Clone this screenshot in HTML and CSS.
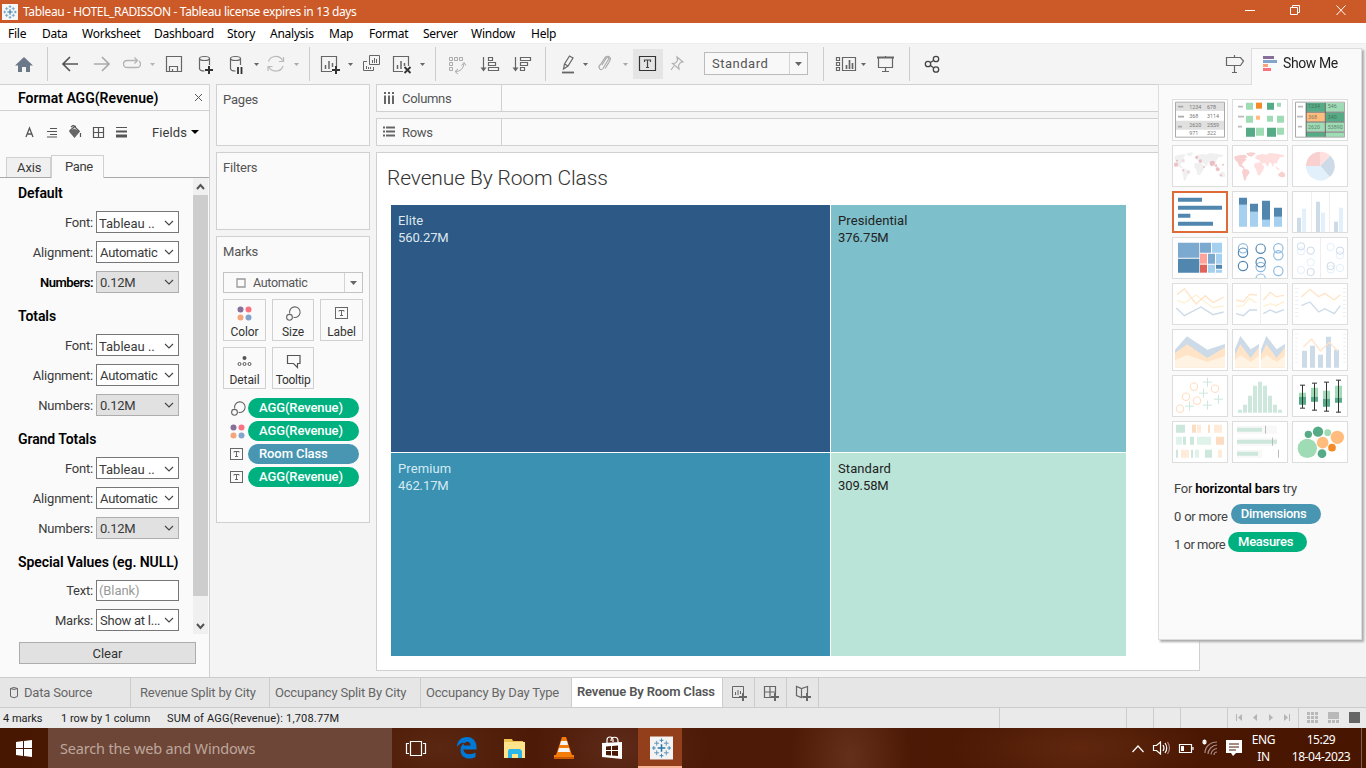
FILE: index.html
```html
<!DOCTYPE html>
<html lang="en">
<head>
<meta charset="utf-8">
<title>Tableau - HOTEL_RADISSON</title>
<link rel="stylesheet" href="styles.css">
</head>
<body>
<svg width="0" height="0" class="defs">
  <defs>
    <g id="tableau-mark" stroke="#2b78a5" fill="none">
      <path d="M12 8v8M8 12h8" stroke-width="1.600"/>
      <path d="M7 4.500v5M4.500 7h5M17 4.500v5M14.500 7h5M7 14.500v5M4.500 17h5M17 14.500v5M14.500 17h5" stroke="#5d93b8"/>
      <path d="M12 2v4M10 4h4M12 18v4M10 20h4M4 10v4M2 12h4M20 10v4M18 12h4" stroke="#3d86af"/>
    </g>
    <g id="size-icon" fill="none" stroke="#666" stroke-width="1.1"><path d="M4.700 7.500A5.300 5.300 0 1 1 8.500 11.300"/><circle cx="4.500" cy="11.300" r="2.900"/></g>
    <g id="color-icon"><circle cx="3.500" cy="3.500" r="3" fill="#86709a"/><circle cx="11.500" cy="3.500" r="3" fill="#f8737f"/><circle cx="3.500" cy="11.500" r="3" fill="#f4a57c"/><circle cx="11.500" cy="11.500" r="3" fill="#83a5cc"/></g>
    <g id="label-icon" fill="none" stroke="#666"><rect x=".5" y=".5" width="12" height="11"/><path d="M4 4.500v-1h5v1M6.500 3.500v5M5 8.500h3"/></g>
    <path id="chevron" d="M1 1l4 4 4-4" fill="none" stroke="#444" stroke-width="1.1"/>
  </defs>
</svg>

<header class="titlebar">
  <svg class="app-icon" width="16" height="16" viewBox="0 0 24 24"><path fill="#f7f7f7" d="M0 0h24v24H0z"/><use href="#tableau-mark"/></svg>
  <span class="title">Tableau - HOTEL_RADISSON - Tableau license expires in 13 days</span>
  <svg class="window-controls" width="130" height="23" viewBox="1236 0 130 23" fill="none" stroke="#fff"><path d="M1245 10.500h10M1290.500 7.500h7v7h-7zM1292.500 7.500v-2h7v7h-2M1336.500 5.500l9 9.500M1345.500 5.500l-9 9.500"/></svg>
</header>

<nav class="menubar">
  <span class="m1">File</span><span class="m2">Data</span><span class="m3">Worksheet</span><span class="m4">Dashboard</span><span class="m5">Story</span><span class="m6">Analysis</span><span class="m7">Map</span><span class="m8">Format</span><span class="m9">Server</span><span class="m10">Window</span><span class="m11">Help</span>
</nav>

<div class="toolbar">
  <svg width="47" height="41" viewBox="0 43 47 41"><path fill="#6b7888" d="M24 57l9 8.500h-3V72h-4v-5h-4v5h-4v-6.500h-3z"/></svg>
  <i class="sep"></i>
  <svg width="38" height="41" viewBox="48 43 38 41"><path d="M78 64H63M70 57l-7 7 7 7" fill="none" stroke="#555" stroke-width="1.700"/></svg>
  <svg width="32" height="41" viewBox="86 43 32 41"><path d="M94 64h15M102 57l7 7-7 7" fill="none" stroke="#aaa" stroke-width="1.700"/></svg>
  <svg width="42" height="41" viewBox="118 43 42 41"><path d="M137 60.500h-9.500q-4 0-4 3.500t4 3.500h9q4 0 4-3.500 0-2-1.500-3M134.500 57.500l3 3-3 3" fill="none" stroke="#b4b4b4" stroke-width="1.300"/><path d="M150 63h5l-2.500 3z" fill="#b4b4b4"/></svg>
  <svg width="30" height="41" viewBox="160 43 30 41"><path d="M166.500 56.500h15v15h-15zM169.500 71v-4.500h8V71M172.500 71v-2" fill="none" stroke="#666" stroke-width="1.200"/></svg>
  <svg width="32" height="41" viewBox="190 43 32 41"><g fill="none" stroke="#666" stroke-width="1.200"><ellipse cx="204.500" cy="58.500" rx="5" ry="2"/><path d="M199.500 58.500v10c0 2 3 2.500 5 2.500M209.500 58.500V65"/></g><path d="M205 70h8M209 66v8" stroke="#333" stroke-width="2"/></svg>
  <svg width="42" height="41" viewBox="222 43 42 41"><g fill="none" stroke="#666" stroke-width="1.200"><ellipse cx="235.500" cy="58.500" rx="5" ry="2"/><path d="M230.500 58.500v10c0 2 3 2.500 5 2.500M240.500 58.500V65"/></g><path d="M238 67v7M241.500 67v7" stroke="#333" stroke-width="1.800"/><path d="M254 63h5l-2.500 3z" fill="#666"/></svg>
  <svg width="45" height="41" viewBox="264 43 45 41"><path d="M268.500 61.500a7.500 7 0 0 1 14-1M283 66a7.500 7 0 0 1-14 1M283.500 57v4.500H279M268 71v-4.500h4.500" fill="none" stroke="#b8b8b8" stroke-width="1.200"/><path d="M294 63h5l-2.500 3z" fill="#aaa"/></svg>
  <i class="sep"></i>
  <svg width="46" height="41" viewBox="310 43 46 41"><path d="M332 71.500h-10.500v-15h15V67" fill="none" stroke="#666" stroke-width="1.200"/><path d="M325.500 65v4M329 61v8M332.500 63v4" stroke="#666" stroke-width="1.500"/><path d="M332 70h8M336 66v8" stroke="#333" stroke-width="2"/><path d="M348 63h5l-2.500 3z" fill="#666"/></svg>
  <svg width="30" height="41" viewBox="356 43 30 41"><g fill="none" stroke="#666"><path d="M367 61.500h-3.500v9h10V67M369.500 55.500h10v9h-10zM366.500 66v3M368.500 67v2M370.500 67v2M372.500 60v3M374.500 58v5M376.500 59v4"/></g></svg>
  <svg width="49" height="41" viewBox="386 43 49 41"><path d="M403 71.500h-9.500v-15h15V66" fill="none" stroke="#666" stroke-width="1.200"/><path d="M397.500 65v4M401 61v8M404.500 63v3" stroke="#666" stroke-width="1.500"/><path d="M404.500 67l6 6M410.500 67l-6 6" stroke="#333" stroke-width="1.800"/><path d="M420 63h5l-2.500 3z" fill="#666"/></svg>
  <i class="sep"></i>
  <svg width="38" height="41" viewBox="436 43 38 41"><path d="M449.500 57.500h3v3h-3zM454.500 57.500h3v3h-3zM459.500 57.500h3v3h-3zM449.500 62.500h3v3h-3zM449.500 67.500h3v3h-3zM455.500 71.500q7.500 0 8.500-8M461.500 65.500l2.500-3 2 3M458 69l-3 2.500 3 2.500" fill="none" stroke="#aaa"/></svg>
  <svg width="32" height="41" viewBox="474 43 32 41"><g fill="none" stroke="#666" stroke-width="1.200"><path d="M483.500 57v13M488.500 57.500h4v3h-4zM488.500 62.500h7v3h-7zM488.500 67.500h10v3h-10z"/></g><path d="M480.500 67.500h6l-3 4z" fill="#666"/></svg>
  <svg width="39" height="41" viewBox="506 43 39 41"><g fill="none" stroke="#666" stroke-width="1.200"><path d="M515.500 57v13M520.500 57.500h10v3h-10zM520.500 62.500h7v3h-7zM520.500 67.500h4v3h-4z"/></g><path d="M512.500 67.500h6l-3 4z" fill="#666"/></svg>
  <i class="sep"></i>
  <svg width="46" height="41" viewBox="546 43 46 41"><path d="M563.500 69l1-5 5-8 3.500 2-5 8zM564.500 64l3.500 2" fill="none" stroke="#666" stroke-width="1.200"/><path d="M562 72.500h12" stroke="#666" stroke-width="1.800"/><path d="M583 63h5l-2.500 3z" fill="#666"/></svg>
  <svg width="40" height="41" viewBox="592 43 40 41"><path d="M602 65l4-6.500q2-2 3 0l-6 10q-2 2.500-3.500 0t1-4l5-7.500q3-2 5 1.500 0 2-5.500 10" fill="none" stroke="#aaa" stroke-width="1.200"/><path d="M623 63h5l-2.500 3z" fill="#aaa"/></svg>
  <svg width="32" height="41" viewBox="632 43 32 41"><path fill="#e5e5e5" d="M633 49h30v30h-30z"/><path d="M639.500 56.500h16v14h-16z" fill="none" stroke="#333" stroke-width="1.200"/><path d="M644.500 62v-2h6v2M647.500 60v7.500M646 67.500h3" stroke="#444" fill="none" stroke-width="1.200"/></svg>
  <svg width="26" height="41" viewBox="664 43 26 41"><path d="M677 57l6 5-2.500.5-2 3 .5 3.500-6.500-5.500 3-.5 2-2.500zM674 66l-3 4" fill="none" stroke="#b0b0b0" stroke-width="1.200"/></svg>
  <div class="fit-select"><span>Standard</span><svg width="18" height="21"><path d="M5 9h7l-3.500 4z" fill="#666"/></svg></div>
  <i class="sep"></i>
  <svg width="45" height="41" viewBox="824 43 45 41"><path d="M836.500 57.500h3v3h-3zM836.500 62.500h3v3h-3zM836.500 67.500h3v3h-3zM842.500 57.500h13v13h-13z" fill="none" stroke="#666" stroke-width="1.200"/><path d="M846.500 65v4M849.500 60v9M852.500 63v6" stroke="#666" stroke-width="1.700"/><path d="M861 63h5l-2.500 3z" fill="#666"/></svg>
  <svg width="40" height="41" viewBox="869 43 40 41"><path d="M877 57.500h17" stroke="#666" stroke-width="2"/><path d="M878.500 58v9.500h14V58M885.500 56v1M885.500 67v4M882 71.500h7" fill="none" stroke="#666" stroke-width="1.200"/></svg>
  <i class="sep"></i>
  <svg width="40" height="41" viewBox="910 43 40 41"><g fill="none" stroke="#444" stroke-width="1.300"><circle cx="928" cy="64" r="2.700"/><circle cx="936" cy="59" r="2.700"/><circle cx="936" cy="69.500" r="2.700"/><path d="M930.500 62.500l3-2M930.500 65.500l3 2.300"/></g></svg>
  <svg class="guide" width="30" height="41" viewBox="1220 43 30 41"><path d="M1234.500 55v2M1226.500 57.500h14l3 3.500-3 4.500h-14zM1234.500 66v6.500M1232 72.500h5" fill="none" stroke="#666" stroke-width="1.200"/></svg>
</div>

<main class="workspace">
  <aside class="format-panel">
    <div class="format-head"><b>Format AGG(Revenue)</b><svg width="9" height="9" viewBox="0 0 9 9"><path d="M1 1l7 7M8 1L1 8" stroke="#555"/></svg></div>
    <div class="format-tools">
      <svg width="125" height="14" viewBox="20 125 125 14"><path d="M26 137l3.500-9 3.500 9M27 134h5" fill="none" stroke="#555" stroke-width="1.300"/><path d="M50 128.500h7M47 131.500h10M50 134.500h7M47 137h10" stroke="#555"/><path d="M69 131.500l5-3 6 3-5.500 6.500z" fill="#666"/><path d="M69.500 131l5-4.500 5 5M71 127l2-1.500 3 1M80.500 133v4" fill="none" stroke="#555" stroke-width="1.200"/><path d="M93.500 127.500h10v10h-10zM98.500 127v11M93 132.500h11" fill="none" stroke="#555" stroke-width="1.200"/><path d="M116 127.500h11" stroke="#555"/><path d="M116 131.500h11" stroke="#555" stroke-width="2"/><path d="M116 136h11" stroke="#555" stroke-width="3"/></svg>
      <span class="t-fields">Fields</span><svg width="8" height="6"><path d="M0 1h8L4 5z"/></svg>
    </div>
    <div class="format-tabs"><span class="tab-axis">Axis</span><span class="tab-pane">Pane</span></div>
    <div class="format-scroll">
      <div class="format-body">
        <h4>Default</h4>
        <label><span>Font:</span><span class="select low">Tableau ..<svg width="10" height="7"><use href="#chevron"/></svg></span></label>
        <label><span>Alignment:</span><span class="select">Automatic<svg width="10" height="7"><use href="#chevron"/></svg></span></label>
        <label><b>Numbers:</b><span class="select grey">0.12M<svg width="10" height="7"><use href="#chevron"/></svg></span></label>
        <h4>Totals</h4>
        <label><span>Font:</span><span class="select low">Tableau ..<svg width="10" height="7"><use href="#chevron"/></svg></span></label>
        <label><span>Alignment:</span><span class="select">Automatic<svg width="10" height="7"><use href="#chevron"/></svg></span></label>
        <label><span>Numbers:</span><span class="select grey">0.12M<svg width="10" height="7"><use href="#chevron"/></svg></span></label>
        <h4>Grand Totals</h4>
        <label><span>Font:</span><span class="select low">Tableau ..<svg width="10" height="7"><use href="#chevron"/></svg></span></label>
        <label><span>Alignment:</span><span class="select">Automatic<svg width="10" height="7"><use href="#chevron"/></svg></span></label>
        <label><span>Numbers:</span><span class="select grey">0.12M<svg width="10" height="7"><use href="#chevron"/></svg></span></label>
        <h4>Special Values (eg. NULL)</h4>
        <label class="text-row"><span>Text:</span><span class="select blank">(Blank)</span></label>
        <label><span>Marks:</span><span class="select">Show at l...<svg width="10" height="7"><use href="#chevron"/></svg></span></label>
      </div>
      <div class="scrollbar"><svg width="15" height="17"><path d="M4 11l3.500-4 3.500 4" fill="none" stroke="#555" stroke-width="2"/></svg><i></i><svg width="15" height="17"><path d="M4 7l3.500 4L11 7" fill="none" stroke="#555" stroke-width="2"/></svg></div>
    </div>
    <button class="clear">Clear</button>
  </aside>

  <section class="cards">
    <div class="card pages">Pages</div>
    <div class="card filters">Filters</div>
    <div class="card marks">
      <div>Marks</div>
      <div class="mark-type"><svg width="10" height="10"><path d="M1 1h8v8H1z" fill="none" stroke="#999" stroke-width="1.300"/></svg><span>Automatic</span><svg class="arrow" width="18" height="19"><path d="M5 8h7l-3.500 4z" fill="#666"/></svg></div>
      <div class="mark-buttons">
        <div><svg width="15" height="15"><use href="#color-icon"/></svg>Color</div>
        <div><svg width="16" height="15"><use href="#size-icon"/></svg>Size</div>
        <div><svg width="13" height="15"><use href="#label-icon" y="1"/></svg>Label</div>
        <div><svg width="15" height="15"><circle cx="7.500" cy="4" r="2" fill="#555"/><g fill="none" stroke="#555"><circle cx="2.500" cy="10" r="1.500"/><circle cx="7.500" cy="10" r="1.500"/><circle cx="12.500" cy="10" r="1.500"/></g></svg>Detail</div>
        <div><svg width="15" height="15"><path d="M1.500 1.500h12.500v8h-2.500v4l-4-4h-6z" fill="none" stroke="#555" stroke-width="1.200"/></svg><span class="tooltip-label">Tooltip</span></div>
      </div>
      <div class="mark-pills">
        <div><svg width="16" height="15"><use href="#size-icon"/></svg><span class="pill green">AGG(Revenue)</span></div>
        <div><svg width="16" height="15"><use href="#color-icon"/></svg><span class="pill green">AGG(Revenue)</span></div>
        <div><svg width="16" height="15"><use href="#label-icon" y="1"/></svg><span class="pill blue">Room Class</span></div>
        <div><svg width="16" height="15"><use href="#label-icon" y="1"/></svg><span class="pill green">AGG(Revenue)</span></div>
      </div>
    </div>
  </section>

  <section class="view">
    <div class="shelf"><span><svg width="12" height="12"><path d="M2 0v2M2 3.500V12M6 0v2M6 3.500V12M10 0v2M10 3.500V12" stroke="#666" stroke-width="2"/></svg><em>Columns</em></span></div>
    <div class="shelf"><span><svg width="12" height="12"><path d="M0 1.500h2M3 1.500h9M0 5.500h2M3 5.500h9M0 9.500h2M3 9.500h9" stroke="#666" stroke-width="2"/></svg><em>Rows</em></span></div>
    <div class="sheet">
      <h1>Revenue By Room Class</h1>
      <div class="treemap">
        <div class="elite"><span>Elite</span><span class="val">560.27M</span></div>
        <div class="presidential"><span>Presidential</span><span class="val">376.75M</span></div>
        <div class="premium"><span>Premium</span><span class="val">462.17M</span></div>
        <div class="standard"><span>Standard</span><span class="val">309.58M</span></div>
      </div>
    </div>
  </section>

  <aside class="show-me">
    <div class="show-me-tab"><svg width="14" height="16"><path fill="#86709a" d="M0 0h11v3H0z"/><path fill="#83a5cc" d="M0 4h14v3H0z"/><path fill="#f4a57c" d="M0 8h5v3H0z"/><path fill="#f8737f" d="M0 12h8v3H0z"/></svg><span>Show Me</span></div>
    <div class="show-me-body">
      <div class="thumbs">
        <svg viewBox="45 37 162 120"><path fill="#e0e0e0" d="M54 45h145v25H54zM54 99h145v27H54z"/><path d="M52.500 43.500h147v105h-147z" fill="none" stroke="#aaa" stroke-width="3"/><path d="M60 57h16M60 87h18M60 117h12" stroke="#aaa" stroke-width="5"/><g class="tiny"><text x="94" y="64">1234</text><text x="147" y="64">678</text><text x="94" y="92">368</text><text x="147" y="92">3114</text><text x="94" y="118">2620</text><text x="147" y="118">2559</text><text x="94" y="142">971</text><text x="147" y="142">322</text></g></svg>
        <svg viewBox="225 37 162 120"><path d="M240 57h15M240 87h18M240 117h12" stroke="#bbb" stroke-width="5"/><path fill="#9fdbb5" d="M264 45h21v21h-21zM357 45h12v12h-12zM264 84h21v21h-21zM327 84h18v18h-18zM357 84h21v21h-21zM294 120h24v24h-24zM357 120h21v21h-21z"/><path fill="#54ab85" d="M327 45h21v21h-21zM264 120h27v27h-27zM327 120h27v27h-27z"/><path fill="#f38b28" d="M294 45h18v18h-18z"/><path fill="#ffbc7c" d="M294 84h12v12h-12z"/></svg>
        <svg viewBox="405 37 162 120"><path fill="#54ab85" d="M444 45h57v27h-57zM503 75h55v27h-55zM444 134h57v14h-57z"/><path fill="#9fdbb5" d="M503 45h55v27h-55zM444 104h57v27h-57zM503 104h55v27h-55zM503 134h55v14h-55z"/><path fill="#ffbc7c" d="M444 75h57v27h-57z"/><path d="M444.500 45v103M502 45v103M444 73.500h115M444 103h115M444 133h115" stroke="#666" stroke-width="3"/><path d="M412.500 43.500h147v105h-147z" fill="none" stroke="#aaa" stroke-width="3"/><path d="M420 57h15M417 87h18M420 117h12" stroke="#bbb" stroke-width="5"/><g class="tiny dark"><text x="450" y="62">1234</text><text x="509" y="62">546</text><text x="450" y="94">368</text><text x="509" y="94">340</text><text x="450" y="123">2620</text><text x="509" y="123">53890</text></g></svg>

        <svg viewBox="45 175 162 120"><g fill="#f0f0f0"><path d="M48 207l13-6 20-2 2 4-8 9 6 4-9 6-6 10 8 6-3 4-12-6-6-13-2-8zM84 197l16-3 6 3-9 10-6-3zM76 241l16 7 3 7-9 12-4 12-4-1-4-19-2-6zM110 211l8-9 16-3 12 2 8-5 23 2 19 5-5 5-9 1-6 9-4 10-7-3-5 14-4-12-5-3-6 14-9-12-11 2-3-8-6-4zM110 227l18-3 11 13-3 9-10 17-7-1-5-17-6-8zM173 235l6 5 6 4-2 4-8-5zM182 260l12-9 8 8-2 9-10 1-8-4z"/></g><g fill="#e8a3a9" fill-opacity=".65"><circle cx="54" cy="231" r="6.500"/><circle cx="163" cy="227" r="8"/><circle cx="127" cy="220" r="5"/><circle cx="116" cy="209" r="4.500"/><circle cx="179" cy="245" r="6"/><circle cx="76" cy="220" r="5" fill-opacity=".3"/><circle cx="92" cy="253" r="5" fill-opacity=".3"/><circle cx="75" cy="248" r="3"/><circle cx="138" cy="238" r="3"/><circle cx="174" cy="234" r="4"/><circle cx="195" cy="231" r="3"/><circle cx="189" cy="263" r="3"/><circle cx="57" cy="219" r="3"/></g></svg>
        <svg viewBox="225 175 162 120"><g fill="#ffdfde"><path d="M290 211l8-9 16-3 12 2 8-5 23 2 23 5-5 5-9 1-6 9-4 10-7-3-5 14-4-12-5-3-6 14-9-12-11 2-3-8-6-4zM290 227l18-3 11 13-3 9-10 17-7-1-5-17-6-8zM353 235l6 5 6 4-2 4-8-5z"/><path fill="#f7d0cf" d="M228 207l13-4 20-2 8 8-9 3 6 4-9 6-6 10 8 6-3 4-12-6-6-13-7-6zM264 197l16-3 14 2-13 11-10-2zM256 241l16 7 3 7-9 12-4 12-4-1-4-19-2-6zM360 260l12-9 10 8-2 9-10 1-8-4z"/></g></svg>
        <svg viewBox="405 175 162 120"><g transform="translate(487 235)"><path fill="#ffe0df" d="M0 0V-43A43 43 0 0 1 30-31z"/><path fill="#cddae8" d="M0 0L30-31A43 43 0 0 1 28 33z"/><path fill="#e2f0fc" d="M0 0L28 33A43 43 0 0 1-43 0z"/><path fill="#f7d0cf" d="M0 0H-43A43 43 0 0 1 0-43z"/></g></svg>

        <svg class="selected" viewBox="48 316 156 114"><path fill="#5186af" d="M60 330h72v12H60zM60 354h132v12H60zM60 378h37v12H60zM60 402h105v12H60z"/></svg>
        <svg viewBox="225 313 162 120"><path fill="#a6d0ef" d="M243 351h24v66h-24zM276 372h24v45h-24zM312 396h24v21h-24zM348 387h24v30h-24z"/><path fill="#5186af" d="M243 330h24v21h-24zM276 348h24v24h-24zM312 339h24v57h-24zM348 360h24v27h-24z"/></svg>
        <svg viewBox="405 313 162 120"><path d="M460.500 313v120M514.500 313v120" stroke="#eee" stroke-width="3"/><path fill="#cddae8" d="M417 390h12v43h-12zM474 342h12v91h-12zM528 402h12v31h-12z"/><path fill="#e2f0fc" d="M432 363h12v70h-12zM489 375h12v58h-12zM543 360h12v73h-12z"/></svg>

        <svg viewBox="45 451 162 120"><path fill="#7ca9cf" d="M60 465h64v45H60zM126 465h33v30h-33zM150 498h21v30h-21z"/><path fill="#5186af" d="M60 513h64v42H60zM174 531h18v12h-18z"/><path fill="#a6d0ef" d="M162 465h30v30h-30zM174 498h18v30h-18zM150 531h21v24h-21zM174 546h18v9h-18z"/><path fill="#ffa39b" d="M126 498h21v30h-21z"/><path fill="#e0635a" d="M126 531h21v24h-21z"/></svg>
        <svg viewBox="225 451 162 120"><g fill="none" stroke="#8ebbe0" stroke-width="3.500"><circle cx="255" cy="482" r="14"/><circle cx="308" cy="538" r="14"/><circle cx="308" cy="573" r="14"/><circle cx="361" cy="482" r="14"/><circle cx="361" cy="503" r="14"/><circle cx="361" cy="550" r="14"/><g stroke="#5186af"><circle cx="255" cy="495" r="14"/><circle cx="255" cy="535" r="14"/><circle cx="308" cy="483" r="14"/><circle cx="308" cy="524" r="14"/></g></g></svg>
        <svg viewBox="405 451 162 120"><path d="M487.500 451v120" stroke="#eee" stroke-width="3"/><g fill="none" stroke="#e2f0fc" stroke-width="3"><circle cx="429" cy="491" r="11"/><circle cx="458" cy="524" r="11"/><circle cx="429" cy="547" r="11"/><circle cx="518" cy="478" r="11"/><circle cx="546" cy="503" r="11"/><circle cx="518" cy="545" r="11"/><circle cx="546" cy="541" r="11"/><g stroke="#cddae8"><circle cx="429" cy="476" r="11"/><circle cx="458" cy="489" r="11"/><circle cx="458" cy="553" r="11"/><circle cx="546" cy="489" r="11"/><circle cx="518" cy="535" r="11"/></g></g></svg>

        <svg viewBox="45 19 162 120"><g fill="none" stroke-width="4"><path stroke="#fff0d2" d="M57 68l22 8 35-24 50 38 33-5"/><path stroke="#ffe4c8" d="M57 51l22-18 35 46 28-25 23 21 32-17"/><path stroke="#cddae8" d="M55 91l24 23 50-26 36 23 32-8"/></g></svg>
        <svg viewBox="225 19 162 120"><path d="M307.500 19v120" stroke="#eee" stroke-width="3"/><g fill="none" stroke-width="4"><path stroke="#fff0d2" d="M234 87l22-4 18-21 21 14M316 87l21-9 17 6 24-12"/><path stroke="#ffe4c8" d="M234 67l22 5 19-22 22 2M316 67l21-23 17 13 24-4"/><path stroke="#cddae8" d="M234 108l22 6 19-17h22M316 108l21-11 17 8 24-9"/></g></svg>
        <svg viewBox="405 19 162 120"><g fill="none" stroke-width="4"><path stroke="#ffe4c8" d="M430 58l26-23 26 22 18-10 29 20 18-16"/><path stroke="#cddae8" d="M430 84l26-11 26 30 18-10 29 15 18-24"/><path stroke="#f0f0f0" stroke-width="10" stroke-dasharray="3 9" d="M416 31v94M560 31v94"/></g></svg>

        <svg viewBox="45 157 162 120"><path fill="#cddae8" d="M51 216l36-40 61 40 53-17v71H51z"/><path fill="#ffe4c8" d="M51 226l36-26 61 41 53-32v61H51z"/><path fill="#fff4e4" d="M51 248l36-16 61 21 53-18v35H51z"/></svg>
        <svg viewBox="225 157 162 120"><g id="area-pane"><path fill="#cddae8" d="M231 215l16-40 31 40 25-16v71h-72z"/><path fill="#ffe4c8" d="M231 232l16-32 31 41 25-32v61h-72z"/><path fill="#fff4e4" d="M231 248l16-16 31 21 25-19v36h-72z"/></g><use href="#area-pane" x="78"/></svg>
        <svg viewBox="405 157 162 120"><path fill="#cddae8" d="M432 219h15v51h-15zM456 204h15v66h-15zM480 231h15v39h-15zM504 177h15v93h-15zM528 216h15v54h-15z"/><path fill="none" stroke="#ffe4c8" stroke-width="4" d="M436 208l25-24 26 36 27-26 25 26"/><path stroke="#f0f0f0" stroke-width="9" stroke-dasharray="3 9" d="M415 168v94M560 168v94"/></svg>

        <svg viewBox="45 295 162 120"><g fill="none" stroke="#ffe0c5" stroke-width="3.500"><circle cx="108" cy="327" r="11"/><circle cx="171" cy="333" r="11"/><circle cx="84" cy="357" r="11"/><circle cx="117" cy="369" r="11"/><circle cx="66" cy="393" r="11"/></g><path d="M148.500 300v27M135 313.500h27M136.500 333v27M123 346.500h27M181.500 351v27M168 364.500h27M94.500 372v27M81 385.500h27M148.500 369v27M135 382.500h27" stroke="#cde7dc" stroke-width="3"/></svg>
        <svg viewBox="225 295 162 120"><path fill="#cde7dc" d="M240 396h12v9h-12zM255 381h12v24h-12zM270 354h12v51h-12zM285 324h12v81h-12zM300 312h12v93h-12zM315 324h12v81h-12zM330 354h12v51h-12zM345 381h12v24h-12zM360 396h12v9h-12z"/></svg>
        <svg viewBox="405 295 162 120"><path fill="#9fdbb5" d="M423 345h21v12h-21zM459 330h21v27h-21zM495 339h21v24h-21zM531 324h21v36h-21z"/><path fill="#54ab85" d="M423 357h21v24h-21zM459 357h21v15h-21zM495 363h21v24h-21zM531 360h21v15h-21z"/><path d="M433.500 322v69M426 322.500h15M426 391.500h15M469.500 317v81M462 316.500h15M462 397.500h15M505.500 314v87M498 313.500h15M498 400.500h15M541.500 308v96M534 307.500h15M534 403.500h15" stroke="#333" stroke-width="3"/></svg>

        <svg viewBox="45 433 162 120"><path fill="#cde7dc" d="M54 441h27v24H54zM75 477h9v24h-9zM96 477h12v24H96zM54 516h6v24h-6zM99 516h6v24h-6zM141 516h21v24h-21z"/><path fill="#e0f3ea" d="M54 477h18v24H54zM117 477h42v24h-42zM111 516h12v24h-12z"/><path fill="#fcdcc2" d="M102 441h12v24h-12zM150 441h6v24h-6zM174 477h24v24h-24z"/><path fill="#ffebd9" d="M117 441h12v24h-12zM168 441h24v24h-24zM69 516h24v24H69zM180 516h12v24h-12z"/></svg>
        <svg viewBox="225 433 162 120"><path fill="#f8f8f8" d="M237 444h120v24H237zM237 480h120v24H237zM237 516h75v24h-75z"/><path fill="#cde7dc" d="M237 450h75v12h-75zM237 486h120v12H237zM237 522h63v12h-63z"/><path d="M322.500 444v24M343.500 480v24M361.500 516v24" stroke="#bbb" stroke-width="3"/></svg>
        <svg viewBox="405 433 162 120"><g fill="#54ab85"><circle cx="451" cy="470" r="11"/><circle cx="480" cy="462" r="15.500"/><circle cx="492" cy="528" r="13"/></g><g fill="#9fdbb5"><circle cx="448" cy="512" r="29"/><circle cx="509" cy="465" r="10"/></g><g fill="#ffbc7c"><circle cx="538" cy="479" r="20"/><circle cx="494" cy="495" r="17.500"/></g><circle cx="522" cy="510" r="11.500" fill="#f38b28"/></svg>
      </div>
      <div class="hint"><p class="try"><span>For </span><b>horizontal bars</b><span> try</span></p><p><span>0 or more</span><span class="pill blue dim">Dimensions</span></p><p class="one"><span>1 or more</span><span class="pill green mea">Measures</span></p></div>
    </div>
  </aside>
</main>

<nav class="sheet-tabs">
  <span class="s1"><svg width="10" height="14"><path d="M1.500 2.500v8q3.500 2.500 7 0v-8q-3.500-2-7 0 3.500 2 7 0" fill="none" stroke="#666"/></svg>Data Source</span><span class="s2">Revenue Split by City</span><span class="s3">Occupancy Split By City</span><span class="s4">Occupancy By Day Type</span><span class="active">Revenue By Room Class</span><span class="add"><svg width="16" height="16" fill="none" stroke="#666"><path d="M8 12.500H1.500v-11h11V8M4.500 7v3M7 5v5M9.500 6v3"/><path d="M8 12h8M12 8v8" stroke-width="2"/></svg></span><span class="add"><svg width="16" height="16" fill="none" stroke="#666"><path d="M8 12.500H1.500v-11h11V8M7 1v11M1 7h12" stroke-width="1.200"/><path d="M8 12h8M12 8v8" stroke-width="2"/></svg></span><span class="add"><svg width="16" height="16" fill="none" stroke="#666"><path d="M8 11.500L6.500 12.500l-5-2v-9l5 2 6-2V8M6.500 3.500v9" stroke-width="1.200"/><path d="M8 12h8M12 8v8" stroke-width="2"/></svg></span>
</nav>

<footer class="status">
  <span class="q1">4 marks</span><span class="q2">1 row by 1 column</span><span class="q3">SUM of AGG(Revenue): 1,708.77M</span>
  <svg width="367" height="20" viewBox="999 708 367 20"><path d="M999.500 708v20M1126.500 708v20M1153.500 708v20M1180.500 708v20M1227.500 708v20M1298.500 708v20" stroke="#ccc"/><path d="M1236 714h1v7h-1zM1242 714v7l-4-3.500zM1257 714v7l-4-3.500zM1269 714v7l4-3.500zM1284 714v7l4-3.500zM1289 714h1v7h-1z" fill="#b5b5b5"/><path d="M1307 712h3v3h-3zM1311 712h3v3h-3zM1315 712h3v3h-3zM1307 716h3v3h-3zM1311 716h3v3h-3zM1315 716h3v3h-3zM1307 720h3v3h-3zM1311 720h3v3h-3zM1315 720h3v3h-3zM1328 712h11v7h-11zM1328 720h3v3h-3zM1332 720h3v3h-3zM1336 720h3v3h-3z" fill="#b9b9b9"/><path d="M1349 712h11v11h-11z" fill="#666"/></svg>
</footer>

<footer class="taskbar">
  <svg width="48" height="40" viewBox="0 728 48 40"><path fill="#fff" d="M16 742l7-1v7h-7zM24 741l8-1v8h-8zM16 749h7v7l-7-1zM24 749h8v8l-8-1z"/></svg>
  <div class="search">Search the web and Windows</div>
  <svg width="246" height="40" viewBox="392 728 246 40"><path d="M410.500 741.500h11v14h-11zM409 743.500h-2.500v10h2.500M423 743.500h2.500v10h-2.500" fill="none" stroke="#fff" stroke-width="1.200"/>
    <path fill="#0078d7" d="M457 747c0-6 4-10 10-10 6 0 9.500 4.500 9.500 10v2.500h-13c0 5 7 6 12 3v4.500c-7 3.500-15 1-15-7 0-4 2-6 5-7.500-4 0-7 2-8.500 4.500zm6.500-1.500h7c0-5-6-5-7 0z"/>
    <path fill="#eec34f" d="M504 739h8l1 2h10v17h-19z"/><path fill="#ffe48c" d="M504 742h21v16h-21z"/><path fill="#29b6ea" d="M508 758v-7l1-2h11l2 2v7h-4v-4h-6v4z"/>
    <path fill="#f47c0b" d="M562 737h4l6 18h-16zM554 755h20v4h-20z"/><path fill="#f5f5f5" d="M561 741h6l1 4h-8zM559 748h10l1 4h-12z"/><path fill="#cc5800" d="M554 757h20v2h-20z"/>
    <path fill="#fff" d="M602 743l20-1v17l-20-2z"/><path d="M607 743v-3c0-4 6-4 6 0v2M611 741c0-5 7-5 7 0v2" fill="none" stroke="#fff" stroke-width="1.200"/><path fill="#4a1a07" d="M606 746.500l5-.5v4h-5zM612 746l6-.5v4.500h-6zM606 751h5v4.500l-5-.5zM612 751h6v5l-6-.5z"/></svg>
  <div class="running"><svg width="23" height="24" viewBox="0 0 24 24"><path fill="#f3f3f3" d="M0 0h24v24H0z"/><use href="#tableau-mark"/></svg></div>
  <svg class="tray" width="118" height="40" viewBox="1128 728 118 40"><g fill="none" stroke="#fff" stroke-width="1.200"><path d="M1132.500 752l5.500-6 5.500 6M1153.500 745.500h3l4-3.500v12l-4-3.500h-3zM1163 745q2 3 0 6M1165 743q3.500 5 0 10"/><path d="M1167.500 742q4 6 0 12M1205 753c0-6 5-11 12-11M1208 754c0-4 4-9 9-9M1211 754.500c0-3 3-6 6-6M1214 755q0-3 3-3" stroke="#a88"/><path d="M1179.500 744.500h12v8h-12zM1193 747v3M1202 742h5M1204.500 739.500v5M1203 740l3 4M1206 740l-3 4"/></g><path fill="#fff" d="M1181 746h3v5h-3zM1226 740h16v13h-6l-3 3-2-3h-5z"/><path d="M1229 744h10M1229 747h10M1229 750h7" stroke="#4a1a07"/></svg>
  <div class="clock lang"><span>ENG</span><span>IN</span></div>
  <div class="clock time"><span>15:29</span><span>18-04-2023</span></div>
</footer>
</body>
</html>
```

FILE: styles.css
```css
* { box-sizing: border-box; }
body { margin: 0; width: 1366px; height: 768px; overflow: hidden; display: flex; flex-direction: column; background: #f4f4f4; font-family: Roboto, "Noto Sans", sans-serif; font-size: 13px; color: #444; white-space: nowrap; }
svg { display: block; flex: none; }
.defs { position: absolute; }
h1, h4, p { margin: 0; }
em { font-style: normal; }

.titlebar { height: 23px; flex: none; display: flex; align-items: center; background: #cb5a28; color: #fff; font: 12px "Noto Sans", sans-serif; padding-left: 2px; }
.title { margin-left: 5px; letter-spacing: -.36px; }
.window-controls { margin-left: auto; }
.menubar { height: 20px; flex: none; background: #fff; color: #000; display: flex; align-items: center; padding: 1px 0 0 8px; font: 12px "Noto Sans", sans-serif; letter-spacing: -.25px; }
.m1 { width: 34px; } .m2 { width: 40px; } .m3 { width: 72px; } .m4 { width: 73px; } .m5 { width: 43px; } .m6 { width: 59px; } .m7 { width: 40px; } .m8 { width: 54px; } .m9 { width: 48px; } .m10 { width: 60px; } .m11 { width: 40px; }

.toolbar { height: 41px; flex: none; display: flex; align-items: center; box-shadow: inset 0 1px #eee; }
.sep { width: 1px; height: 34px; background: #ccc; flex: none; }
.guide { margin-left: 270px; }
.fit-select { width: 104px; height: 23px; margin: 0 15px 0 14px; border: 1px solid #bbb; display: flex; align-items: center; justify-content: space-between; padding-left: 7px; color: #555; letter-spacing: .5px; background: #f8f8f8; }
.fit-select svg { border-left: 1px solid #d4d4d4; }

.workspace { height: 593px; flex: none; display: flex; position: relative; }
.format-panel { width: 210px; height: 593px; border: solid #d0d0d0; border-width: 1px 1px 0 0; background: #fafafa; display: flex; flex-direction: column; color: #3a3a3a; letter-spacing: -.2px; }
.format-head { height: 26px; border-bottom: 1px solid #d0d0d0; display: flex; align-items: center; justify-content: space-between; padding: 0 6px 0 18px; color: #000; font-size: 14px; letter-spacing: 0; }
.format-head b, h4, label b, .hint b { font-weight: 600; }
.format-tools { display: flex; align-items: center; height: 42px; padding-left: 20px; }
.t-fields { margin: 0 4px 0 7px; letter-spacing: .1px; }
.format-tabs { height: 25px; flex: none; display: flex; align-items: flex-end; padding: 0 0 1px 6px; box-shadow: inset 0 -1px #aaa; }
.tab-axis { width: 45px; height: 20px; border: 1px solid #d0d0d0; border-bottom: 0; background: #f0f0f0; padding: 2px 0 0 10px; letter-spacing: -.1px; }
.tab-pane { width: 53px; height: 23px; margin-bottom: -1px; border: 1px solid #d0d0d0; border-bottom: 0; background: #fafafa; padding: 3px 0 0 13px; letter-spacing: -.4px; }
.format-scroll { display: flex; height: 456px; flex: none; }
.format-body { width: 193px; padding: 0 14px 0 18px; }
h4 { font-size: 14px; height: 33px; line-height: 31px; color: #000; letter-spacing: -.08px; }
label { display: flex; justify-content: flex-end; align-items: center; height: 22px; margin-bottom: 8px; }
label.text-row { height: 21px; }
label b { color: #000; letter-spacing: -.5px; }
.select { width: 83px; height: 22px; margin-left: 3px; border: 1px solid #777; background: #fff; display: flex; align-items: center; justify-content: space-between; padding: 0 4px 0 3px; letter-spacing: -.25px; }
.select.low { padding-top: 2px; letter-spacing: 0; padding-left: 2px; }
.select.grey { background: #e1e1e1; border-color: #adadad; }
.select.blank { height: 21px; color: #999; padding-left: 2px; letter-spacing: -.1px; }
.scrollbar { width: 15px; background: #f0f0f0; display: flex; flex-direction: column; justify-content: space-between; }
.scrollbar i { background: #cdcdcd; height: 401px; margin-bottom: 21px; }
.clear { width: 177px; height: 22px; margin: 8px 0 0 19px; border: 1px solid #adadad; background: #e1e1e1; color: #333; font: 13px Roboto, sans-serif; padding: 0; }

.cards { width: 154px; margin-left: 6px; display: flex; flex-direction: column; gap: 6px; flex: none; color: #555; }
.card { border: 1px solid #d0d0d0; background: #fafafa; padding: 7px 6px; letter-spacing: -.2px; }
.pages { height: 62px; } .filters { height: 78px; } .marks { height: 287px; }
.mark-type { height: 21px; margin-top: 13px; border: 1px solid #c4c4c4; display: flex; align-items: center; padding-left: 12px; gap: 7px; font-size: 12.5px; letter-spacing: -.35px; }
.arrow { margin-left: auto; border-left: 1px solid #d4d4d4; }
.mark-buttons { display: grid; grid-template-columns: 43px 42px 43px; gap: 6px; margin-top: 6px; color: #333; font-size: 12px; }
.mark-buttons div { height: 42px; border: 1px solid #d0d0d0; display: flex; flex-direction: column; align-items: center; padding-top: 6px; gap: 4px; letter-spacing: -.1px; line-height: 15px; }
.tooltip-label { letter-spacing: -.3px; }
.mark-pills { display: flex; flex-direction: column; gap: 3px; margin-top: 9px; padding-left: 7px; }
.mark-pills div { display: flex; align-items: center; gap: 2px; }
.pill { height: 20px; width: 111px; border-radius: 10px; color: #fff; line-height: 20px; padding-left: 11px; letter-spacing: -.1px; font-weight: 500; font-size: 13px; }
.green { background: #00b180; } .blue { background: #4996b2; }

.view { margin-left: 6px; width: 824px; flex: none; display: flex; flex-direction: column; gap: 6px; }
.shelf { width: 984px; height: 28px; border: 1px solid #d0d0d0; background: #fafafa; color: #555; letter-spacing: -.3px; }
.shelf span { display: flex; align-items: center; gap: 7px; width: 125px; height: 26px; padding-left: 6px; border-right: 1px solid #d0d0d0; }
.sheet { height: 519px; border: 1px solid #d0d0d0; background: #fff; padding: 11px 0 0 10px; }
h1 { font-weight: 300; font-size: 21px; line-height: 28px; color: #333; letter-spacing: -.13px; }
.treemap { margin: 13px 0 0 4px; display: grid; grid-template: 247px 203px / 439px 295px; gap: 1px; color: #222; }
.treemap div { padding: 7px; line-height: 17px; display: flex; flex-direction: column; letter-spacing: .1px; }
.treemap .val { letter-spacing: -.1px; }
.elite { background: #2c5985; color: #dfe7ef; } .presidential { background: #7dbfca; } .premium { background: #3a91b2; color: #d5ebf2; } .standard { background: #bbe4d9; }

.show-me { position: absolute; left: 1158px; top: -36px; width: 205px; filter: drop-shadow(2px 2px 1px #aaa); }
.show-me-tab { margin-left: 93px; height: 37px; width: 111px; background: #fafafa; border: 1px solid #ddd; border-bottom: 0; display: flex; padding: 7px 0 0 11px; gap: 6px; font-size: 14px; color: #222; letter-spacing: -.4px; position: relative; z-index: 1; }
.show-me-tab span { line-height: 15px; }
.show-me-body { width: 204px; height: 556px; margin-top: -1px; border: 1px solid #ddd; background: #fafafa; padding: 14px 13px; }
.thumbs { display: grid; grid-template-columns: repeat(3, 56px); gap: 4px; }
.thumbs svg { width: 56px; height: 42px; border: 1px solid #ddd; background: #fff; }
.thumbs .selected { border: 2px solid #dd6b38; }
.tiny text { font: 16px Roboto, sans-serif; fill: #777; }
.dark text { fill: #445a4e; fill-opacity: .75; }
.hint { padding: 18px 0 0 2px; color: #444; letter-spacing: -.2px; }
.hint p { display: flex; align-items: center; white-space: pre; height: 28px; }
.hint .try { height: 15px; margin-bottom: 6px; }
.hint b { color: #000; }
.hint .pill { margin: -4px 0 0 3px; padding-left: 10px; letter-spacing: -.3px; }
.hint .dim { width: 90px; } .hint .mea { width: 79px; }
.hint .one { letter-spacing: -.5px; }

.sheet-tabs { height: 31px; flex: none; background: #e6e6e6; border: solid #ccc; border-width: 1px 0; display: flex; color: #666; letter-spacing: -.2px; }
.sheet-tabs span { border-right: 1px solid #ccc; display: flex; align-items: center; }
.s1 { width: 131px; padding-left: 9px; gap: 5px; } .s2 { width: 139px; padding-left: 9px; } .s3 { width: 151px; padding-left: 5px; } .s4 { width: 151px; padding-left: 5px; }
.sheet-tabs .active { width: 151px; padding: 0 0 3px 5px; background: #fff; font-weight: 600; color: #555; letter-spacing: -.15px; }
.sheet-tabs .add { width: 32px; padding-left: 8px; }
.status { height: 20px; flex: none; display: flex; align-items: center; background: #eaeaea; font-size: 11px; color: #222; padding-left: 3px; }
.q1 { width: 58px; } .q2 { width: 106px; } .q3 { letter-spacing: .17px; }
.status svg { margin-left: auto; }

.taskbar { height: 40px; flex: none; display: flex; color: #fff; font: 12px "Noto Sans", sans-serif; background: radial-gradient(ellipse 60px 90px at 850px 30px, #64301b 0, transparent 100%), radial-gradient(ellipse 130px 45px at 1080px 20px, #60270e 0, transparent 100%), radial-gradient(ellipse 90px 60px at 620px 20px, #5e2b1a 0, transparent 100%), radial-gradient(ellipse 100px 60px at 440px 20px, #5a2712 0, transparent 100%), linear-gradient(90deg, #481702, #4d1a07 60%, #481500); }
.search { width: 344px; background: #6e4637; color: #bca69d; font-size: 14.5px; line-height: 40px; padding-left: 12px; letter-spacing: -.17px; }
.running { width: 44px; background: #943f1c; border-bottom: 2px solid #f8b597; padding: 8px 0 0 12px; }
.tray { margin-left: auto; }
.clock { display: flex; flex-direction: column; text-align: center; line-height: 17px; padding-top: 3px; letter-spacing: -.4px; }
.lang { width: 35px; } .time { width: 81px; border-right: 1px solid #806050; margin-right: 4px; }
```
